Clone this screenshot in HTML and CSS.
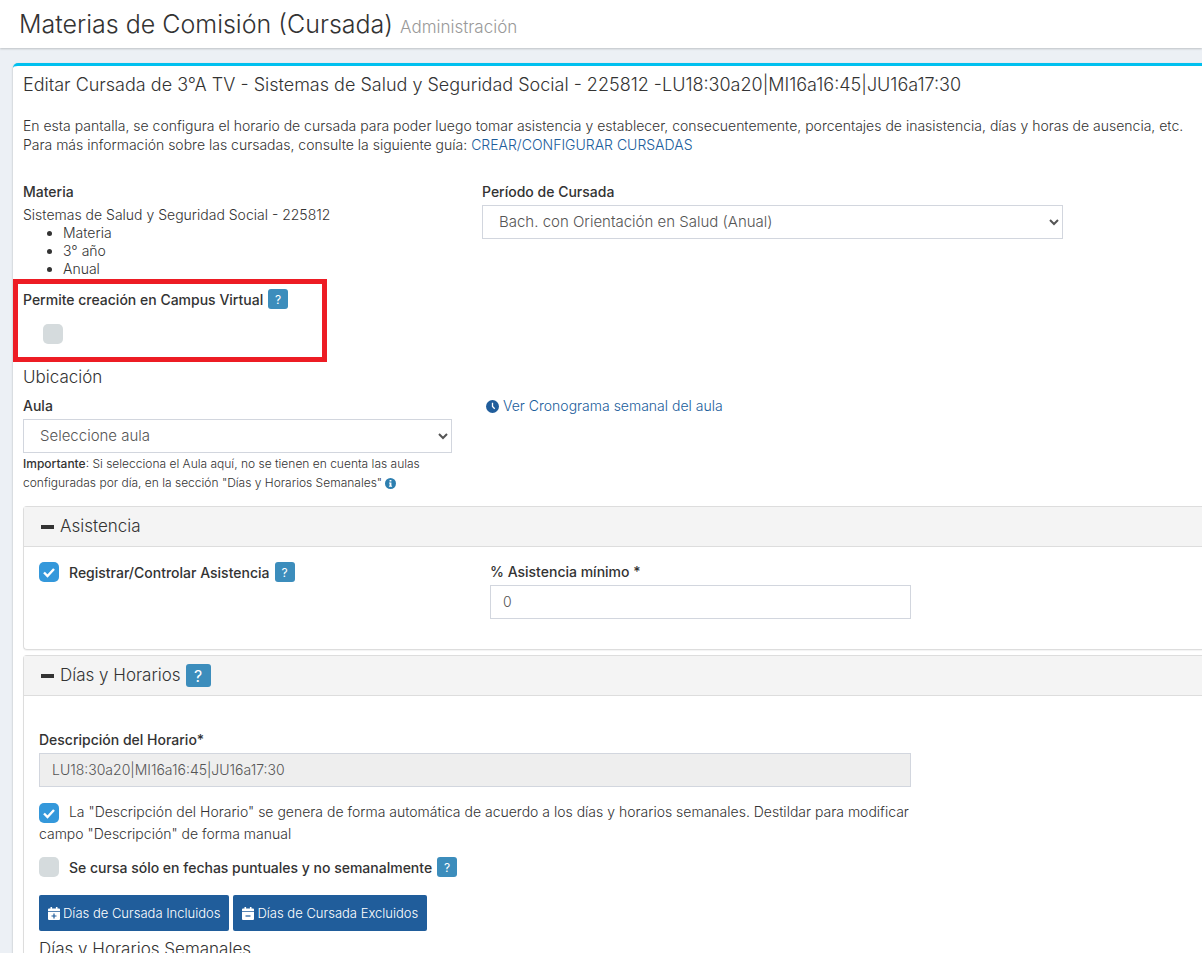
FILE: index.html
```
<!DOCTYPE html>
<html lang="es">
<head>
    <meta charset="UTF-8">
    <meta name="viewport" content="width=device-width, initial-scale=1.0">
    <title>Materias de Comisión (Cursada)</title>
    <link rel="stylesheet" href="styles.css">
</head>
<body>

<header class="content-header">
    <h1>Materias de Comisión (Cursada) <small>Administración</small></h1>
</header>

<main class="box">
    <h2 class="box-title">Editar Cursada de 3°A TV - Sistemas de Salud y Seguridad Social - 225812 -LU18:30a20|MI16a16:45|JU16a17:30</h2>
    <p class="intro">En esta pantalla, se configura el horario de cursada para poder luego tomar asistencia y establecer, consecuentemente, porcentajes de inasistencia, días y horas de ausencia, etc.<br>
    Para más información sobre las cursadas, consulte la siguiente guía: <a href="#">CREAR/CONFIGURAR CURSADAS</a></p>

    <form>
        <div class="row">
            <div class="materia">
                <strong class="label">Materia</strong>
                <div>Sistemas de Salud y Seguridad Social - 225812</div>
                <ul>
                    <li>Materia</li>
                    <li>3° año</li>
                    <li>Anual</li>
                </ul>
            </div>
            <div>
                <label class="label" for="periodo">Período de Cursada</label>
                <select class="control" id="periodo">
                    <option>Bach. con Orientación en Salud (Anual)</option>
                </select>
            </div>
        </div>

        <div class="campus">
            <div class="campus-title">
                <label class="label" for="campus">Permite creación en Campus Virtual</label>
                <button type="button" class="help">?</button>
            </div>
            <input type="checkbox" class="check" id="campus">
        </div>

        <h3 class="subtitle">Ubicación</h3>
        <div class="row">
            <div>
                <label class="label" for="aula">Aula</label>
                <select class="control" id="aula">
                    <option>Seleccione aula</option>
                </select>
                <p class="note"><b>Importante</b>: Si selecciona el Aula aquí, no se tienen en cuenta las aulas configuradas por día, en la sección "Días y Horarios Semanales"
                    <svg class="info" viewBox="0 0 12 12"><circle cx="6" cy="6" r="6"/><path d="M5 2.2h2v1.7H5zM4.4 4.9H7v3.5h.7v1.2H4.3V8.4H5V6.1h-.6z" fill="#fff"/></svg>
                </p>
            </div>
            <div class="schedule">
                <a href="#"><svg class="clock" viewBox="0 0 14 14"><circle cx="7" cy="7" r="7"/><path d="M7 3v4l2.4 2.4" fill="none" stroke="#fff" stroke-width="1.4"/></svg>Ver Cronograma semanal del aula</a>
            </div>
        </div>

        <section class="panel">
            <h3 class="panel-heading"><span class="minus"></span>Asistencia</h3>
            <div class="panel-body">
                <div class="check-line">
                    <input type="checkbox" class="check" id="registrar" checked>
                    <label class="label" for="registrar">Registrar/Controlar Asistencia</label>
                    <button type="button" class="help">?</button>
                </div>
                <div>
                    <label class="label" for="minimo">% Asistencia mínimo *</label>
                    <input type="text" class="control" id="minimo" value="0">
                </div>
            </div>
        </section>

        <section class="panel">
            <h3 class="panel-heading"><span class="minus"></span>Días y Horarios <button type="button" class="help help-lg">?</button></h3>
            <div class="panel-body schedule-body">
                <div class="wide">
                    <label class="label" for="descripcion">Descripción del Horario*</label>
                    <input type="text" class="control" id="descripcion" value="LU18:30a20|MI16a16:45|JU16a17:30" readonly>
                    <p class="auto">
                        <input type="checkbox" class="check" id="auto" checked>
                        <label for="auto">La "Descripción del Horario" se genera de forma automática de acuerdo a los días y horarios semanales. Destildar para modificar<br>campo "Descripción" de forma manual</label>
                    </p>
                    <div class="check-line">
                        <input type="checkbox" class="check" id="puntuales">
                        <label class="label" for="puntuales">Se cursa sólo en fechas puntuales y no semanalmente</label>
                        <button type="button" class="help">?</button>
                    </div>
                    <div class="actions">
                        <button type="button" class="btn"><svg class="calendar" viewBox="0 0 12 13"><path d="M2.5 0h1.6v1.5h3.8V0h1.6v1.5H11a1 1 0 0 1 1 1V4H0V2.5a1 1 0 0 1 1-1h1.5zM0 4.8h12V12a1 1 0 0 1-1 1H1a1 1 0 0 1-1-1z"/><path d="M3.5 9h5M6 6.5v5" stroke="#205d9b" stroke-width="1.2"/></svg>Días de Cursada Incluidos</button>
                        <button type="button" class="btn"><svg class="calendar" viewBox="0 0 12 13"><path d="M2.5 0h1.6v1.5h3.8V0h1.6v1.5H11a1 1 0 0 1 1 1V4H0V2.5a1 1 0 0 1 1-1h1.5zM0 4.8h12V12a1 1 0 0 1-1 1H1a1 1 0 0 1-1-1z"/><path d="M3.5 9h5" stroke="#205d9b" stroke-width="1.2"/></svg>Días de Cursada Excluidos</button>
                    </div>
                    <h3 class="subtitle">Días y Horarios Semanales</h3>
                </div>
            </div>
        </section>
    </form>
</main>

</body>
</html>
```
FILE: styles.css
```
*, *::after {
    box-sizing: border-box;
}
body {
    font-family: Inter, sans-serif;
    font-size: 14px;
    font-weight: 300;
    line-height: 19px;
    background-color: #ecf0f5;
    color: #333;
    margin: 0;
    height: 100vh;
    overflow: hidden;
}
h1, h2, h3, p, ul {
    margin: 0;
    font-weight: 300;
}
a {
    color: #205d9b;
    text-decoration: none;
}
button, input, select {
    font-family: inherit;
    font-weight: 300;
    margin: 0;
}
.content-header {
    background-color: white;
    padding: 9px 19px;
    box-shadow: 0 1px 2px rgba(0, 0, 0, 0.2);
}
.content-header h1 {
    font-size: 25px;
    line-height: 30px;
}
.content-header small {
    font-size: 17px;
    line-height: 20px;
    color: #999;
}
.box {
    margin: 15px 0 0 13px;
    padding: 8px 0 0 10px;
    background-color: white;
    border-top: 3px solid #00c0ef;
    border-radius: 5px 0 0 0;
    box-shadow: 0 1px 2px rgba(0, 0, 0, 0.3);
}
.box-title {
    font-size: 18px;
    line-height: 22px;
    white-space: nowrap;
}
.intro {
    margin: 20px 0 28px;
    white-space: nowrap;
}
.row {
    display: grid;
    grid-template-columns: 429fr 581fr 109fr;
    gap: 30px;
}
.label {
    display: block;
    font-weight: 500;
    margin-bottom: 4px;
}
.materia ul {
    margin-bottom: 1px;
    padding-left: 40px;
    line-height: 18px;
}
.control {
    display: block;
    width: 100%;
    height: 34px;
    padding: 5px 12px 7px;
    border: 1px solid #d2d6de;
    border-radius: 0;
    background-color: white;
    color: #555;
    font-size: 14px;
}
select.control {
    font-size: 15px;
}
.control[readonly] {
    background-color: #eee;
}
.campus {
    position: relative;
    width: max-content;
    padding: 10px 0 18px;
}
/* marco rojo de aviso */
.campus::after {
    content: "";
    position: absolute;
    top: 0;
    bottom: 0;
    left: -10px;
    width: 314px;
    border: 5px solid #ed1c24;
    pointer-events: none;
}
.campus-title, .check-line {
    display: flex;
    align-items: center;
}
.campus .label, .check-line .label {
    margin: 0;
}
.help {
    width: 20px;
    height: 20px;
    margin-left: 5px;
    padding: 0;
    border: 0;
    border-radius: 3px;
    background-color: #3c8dbc;
    color: white;
    font-size: 12px;
    font-weight: 400;
}
.help-lg {
    width: 25px;
    height: 23px;
    font-size: 16px;
}
.check {
    appearance: none;
    flex: none;
    width: 20px;
    height: 20px;
    margin-right: 10px;
    border-radius: 5px;
    background-color: #d5dbdd;
    vertical-align: middle;
}
.check:checked {
    background: #3498db url("data:image/svg+xml,%3Csvg xmlns='http://www.w3.org/2000/svg' viewBox='0 0 20 20'%3E%3Cpath d='M5 10.500l3.500 3.500 6.500-7' fill='none' stroke='white' stroke-width='2.400'/%3E%3C/svg%3E");
}
.campus .check {
    display: block;
    margin: 15px 20px 0;
}
.subtitle {
    font-size: 17px;
    line-height: 20px;
}
.campus + .subtitle {
    margin: 5px 0 9px;
}
.note {
    font-size: 12px;
    margin: 1px 0 14px;
}
.note b {
    font-weight: 500;
}
.info {
    width: 11px;
    height: 11px;
    fill: #2d7fb0;
    vertical-align: -2px;
}
.schedule {
    padding-left: 4px;
}
.clock {
    width: 13px;
    height: 13px;
    margin-right: 4px;
    fill: #205d9b;
    vertical-align: -2px;
}
.panel {
    margin-bottom: 5px;
    border: 1px solid #ddd;
    border-right: 0;
    border-radius: 4px 0 0 4px;
    box-shadow: 0 1px 1px rgba(0, 0, 0, 0.05);
}
.panel-heading {
    display: flex;
    align-items: center;
    height: 40px;
    padding-left: 17px;
    background-color: #f4f4f4;
    border-bottom: 1px solid #ddd;
    font-size: 17px;
}
.minus {
    width: 13px;
    height: 4px;
    margin-right: 6px;
    background-color: #333;
}
.panel-body {
    display: grid;
    grid-template-columns: 421fr 421fr 261fr;
    gap: 30px;
    align-items: start;
    padding: 15px 0 30px 15px;
}
.schedule-body {
    padding-top: 34px;
}
.wide {
    grid-column: span 2;
}
.auto {
    line-height: 21px;
    margin: 14px 0 13px;
    white-space: nowrap;
}
.auto .check {
    margin-right: 6px;
}
.actions {
    display: flex;
    gap: 4px;
    margin: 18px 0 8px;
}
.btn {
    height: 36px;
    padding: 0 9px;
    border: 0;
    border-radius: 2px;
    background-color: #205d9b;
    color: white;
    font-size: 13px;
}
.calendar {
    width: 12px;
    height: 13px;
    margin-right: 3px;
    fill: white;
    vertical-align: -2px;
}
```
